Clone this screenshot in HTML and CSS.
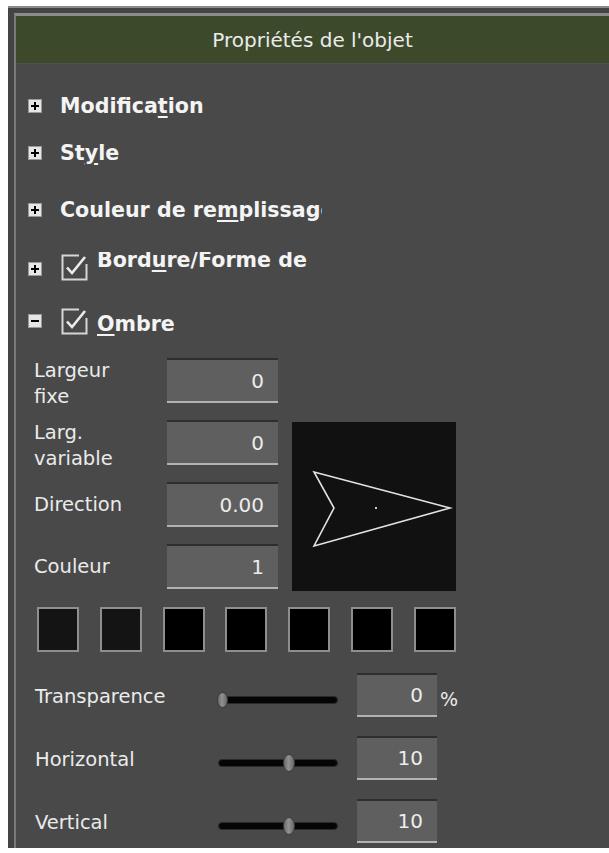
FILE: index.html
```html
<!DOCTYPE html>
<html lang="fr">
<head>
<meta charset="utf-8">
<title>Propriétés de l'objet</title>
<link rel="stylesheet" href="styles.css">
</head>
<body>
<div class="frame">
  <div class="panel">
    <div class="header">Propriétés de l'objet</div>
    <div class="body">
      <div class="tree">
        <div class="trow r1">
          <svg class="exp" viewBox="0 0 14 14"><rect x="0.5" y="0.5" width="13" height="13" fill="#e6e6e6" stroke="#9a9a9a"/><path d="M3 7H11M7 3V11" stroke="#000" stroke-width="2"/></svg>
          <span class="ttext">Modifica<u>t</u>ion</span>
        </div>
        <div class="trow r2">
          <svg class="exp" viewBox="0 0 14 14"><rect x="0.5" y="0.5" width="13" height="13" fill="#e6e6e6" stroke="#9a9a9a"/><path d="M3 7H11M7 3V11" stroke="#000" stroke-width="2"/></svg>
          <span class="ttext">St<u>y</u>le</span>
        </div>
        <div class="trow r3">
          <svg class="exp" viewBox="0 0 14 14"><rect x="0.5" y="0.5" width="13" height="13" fill="#e6e6e6" stroke="#9a9a9a"/><path d="M3 7H11M7 3V11" stroke="#000" stroke-width="2"/></svg>
          <span class="ttext">Couleur de re<u>m</u>plissage</span>
        </div>
        <div class="trow r4 chk">
          <svg class="exp" viewBox="0 0 14 14"><rect x="0.5" y="0.5" width="13" height="13" fill="#e6e6e6" stroke="#9a9a9a"/><path d="M3 7H11M7 3V11" stroke="#000" stroke-width="2"/></svg>
          <svg class="cb" viewBox="0 0 27 27"><path d="M18 1.5H1.5V25.5H25.5V10" fill="none" stroke="#d6d6d6" stroke-width="2"/><path d="M6 13.5L11 19L24 3" fill="none" stroke="#ececec" stroke-width="2.6"/></svg>
          <span class="ttext raised">Bord<u>u</u>re/Forme de remplissage</span>
        </div>
        <div class="trow r5 chk">
          <svg class="exp" viewBox="0 0 14 14"><rect x="0.5" y="0.5" width="13" height="13" fill="#e6e6e6" stroke="#9a9a9a"/><path d="M3 7H11" stroke="#000" stroke-width="2"/></svg>
          <svg class="cb" viewBox="0 0 27 27"><path d="M18 1.5H1.5V25.5H25.5V10" fill="none" stroke="#d6d6d6" stroke-width="2"/><path d="M6 13.5L11 19L24 3" fill="none" stroke="#ececec" stroke-width="2.6"/></svg>
          <span class="ttext lowered"><u>O</u>mbre</span>
        </div>
      </div>

      <div class="props">
        <div class="plabel two">Largeur<br>fixe</div>
        <div class="num">0</div>
        <div class="plabel two">Larg.<br>variable</div>
        <div class="num">0</div>
        <div class="preview">
          <svg viewBox="0 0 164 169" width="164" height="169">
            <polygon points="22,50 158,86 22,124 42,86" fill="none" stroke="#e2e2e2" stroke-width="1.6" stroke-linejoin="miter"/>
            <rect x="83" y="85" width="2" height="2" fill="#cfcfcf"/>
          </svg>
        </div>
        <div class="plabel">Direction</div>
        <div class="num">0.00</div>
        <div class="plabel">Couleur</div>
        <div class="num">1</div>
      </div>

      <div class="swatches">
        <div class="sw dark"></div>
        <div class="sw dark"></div>
        <div class="sw"></div>
        <div class="sw"></div>
        <div class="sw"></div>
        <div class="sw"></div>
        <div class="sw"></div>
      </div>

      <div class="srows">
        <div class="srow">
          <div class="slabel">Transparence</div>
          <div class="slider"><div class="track"></div><div class="thumb start"></div></div>
          <div class="num small">0</div>
          <div class="unit">%</div>
        </div>
        <div class="srow">
          <div class="slabel">Horizontal</div>
          <div class="slider"><div class="track"></div><div class="thumb mid"></div></div>
          <div class="num small">10</div>
        </div>
        <div class="srow">
          <div class="slabel">Vertical</div>
          <div class="slider"><div class="track"></div><div class="thumb mid"></div></div>
          <div class="num small">10</div>
        </div>
      </div>
    </div>
  </div>
</div>
</body>
</html>
```
FILE: styles.css
```css
html, body {
  margin: 0;
  padding: 0;
  background: #ffffff;
}

body {
  font-family: "DejaVu Sans", "Noto Sans", sans-serif;
  color: #e6e6e6;
}

.frame {
  margin: 6px 0 0 8px;
  height: 842px;
  box-sizing: border-box;
  border-top: 2px solid #8a8a8a;
  background: #444444;
  padding: 5px 0 0 6px;
}

.panel {
  height: 100%;
  box-sizing: border-box;
  border-top: 3px solid #8c8c8c;
  border-left: 2px solid #7a7a7a;
  background: #494949;
  overflow: hidden;
}

.header {
  height: 48px;
  background: #3c4a2b;
  display: flex;
  align-items: center;
  justify-content: center;
  font-size: 20px;
  color: #ebebeb;
  border-bottom: 1px solid #505050;
  box-sizing: border-box;
}

.body {
  padding-top: 27px;
}

/* tree */
.tree {
  display: flex;
  flex-direction: column;
}

.trow {
  display: flex;
  align-items: center;
  height: 30px;
  width: 306px;
  padding-left: 12px;
  box-sizing: border-box;
  overflow: hidden;
  white-space: nowrap;
  font-weight: bold;
  font-size: 20.6px;
  line-height: 24px;
  color: #f4f4f4;
}

.r2 { margin-top: 17px; }
.r3 { margin-top: 27px; }
.r4 { margin-top: 27px; width: 298px; }
.r5 { margin-top: 24px; }

.exp {
  width: 14px;
  height: 14px;
  flex: none;
  margin-right: 18px;
}

.chk .exp {
  margin-right: 19px;
}

.r4 .exp { margin-top: 4px; }

.cb {
  width: 27px;
  height: 27px;
  flex: none;
  margin-right: 9px;
}

.ttext {
  flex: none;
}

.ttext u {
  text-decoration: underline;
  text-decoration-thickness: 2px;
  text-underline-offset: 3px;
}

.ttext.raised {
  align-self: flex-start;
  margin-top: -4px;
}

.ttext.lowered {
  padding-top: 6px;
}

/* properties */
.props {
  display: grid;
  grid-template-columns: 133px 111px 178px;
  grid-template-rows: repeat(4, 45px);
  row-gap: 17px;
  margin-top: 22px;
  padding-left: 18px;
}

.plabel {
  grid-column: 1;
  font-size: 19.5px;
  line-height: 26px;
  color: #ebebeb;
  align-self: center;
}

.plabel.two {
  align-self: start;
}

.num {
  box-sizing: border-box;
  height: 45px;
  background: #5f5f5f;
  border-top: 2px solid #2e2e2e;
  border-bottom: 2px solid #b2b2b2;
  display: flex;
  align-items: center;
  justify-content: flex-end;
  padding-right: 14px;
  font-size: 20px;
  color: #ececec;
}

.props .num {
  grid-column: 2;
}

.preview {
  grid-column: 3;
  grid-row: 2 / 5;
  margin: 2px 0 0 14px;
  width: 164px;
  height: 169px;
  background: #111111;
}

.preview svg {
  display: block;
}

/* swatches */
.swatches {
  display: flex;
  justify-content: space-between;
  width: 419px;
  margin: 18px 0 0 21px;
}

.sw {
  width: 42px;
  height: 45px;
  box-sizing: border-box;
  border: 2px solid #8e8e8e;
  background: #000000;
}

.sw.dark {
  background: #141414;
}

/* slider rows */
.srows {
  display: flex;
  flex-direction: column;
  gap: 19px;
  margin-top: 21px;
  padding-left: 19px;
}

.srow {
  display: flex;
  height: 44px;
}

.slabel {
  width: 182px;
  flex: none;
  align-self: center;
  padding-top: 3px;
  font-size: 19.5px;
  line-height: 26px;
  color: #ebebeb;
}

.slider {
  position: relative;
  width: 121px;
  flex: none;
  display: flex;
  align-items: center;
  padding-top: 10px;
  box-sizing: border-box;
}

.track {
  width: 120px;
  height: 8px;
  margin-left: 1px;
  box-sizing: border-box;
  background: #050505;
  border: 1px solid #2a2a2a;
  border-radius: 5px;
}

.thumb {
  position: absolute;
  width: 12px;
  height: 18px;
  top: 18px;
  box-sizing: border-box;
  border-radius: 6px / 9px;
  background: linear-gradient(90deg, #6d6d6d, #909090 45%, #6a6a6a);
  border: 1px solid #3e3e3e;
}

.thumb.mid {
  left: 66px;
}

.thumb.start {
  left: 0;
  width: 11px;
  height: 16px;
  top: 19px;
}

.num.small {
  width: 80px;
  height: 44px;
  margin-left: 19px;
  flex: none;
}

.unit {
  align-self: center;
  padding-top: 8px;
  margin-left: 3px;
  font-size: 19px;
  color: #ebebeb;
}
```
